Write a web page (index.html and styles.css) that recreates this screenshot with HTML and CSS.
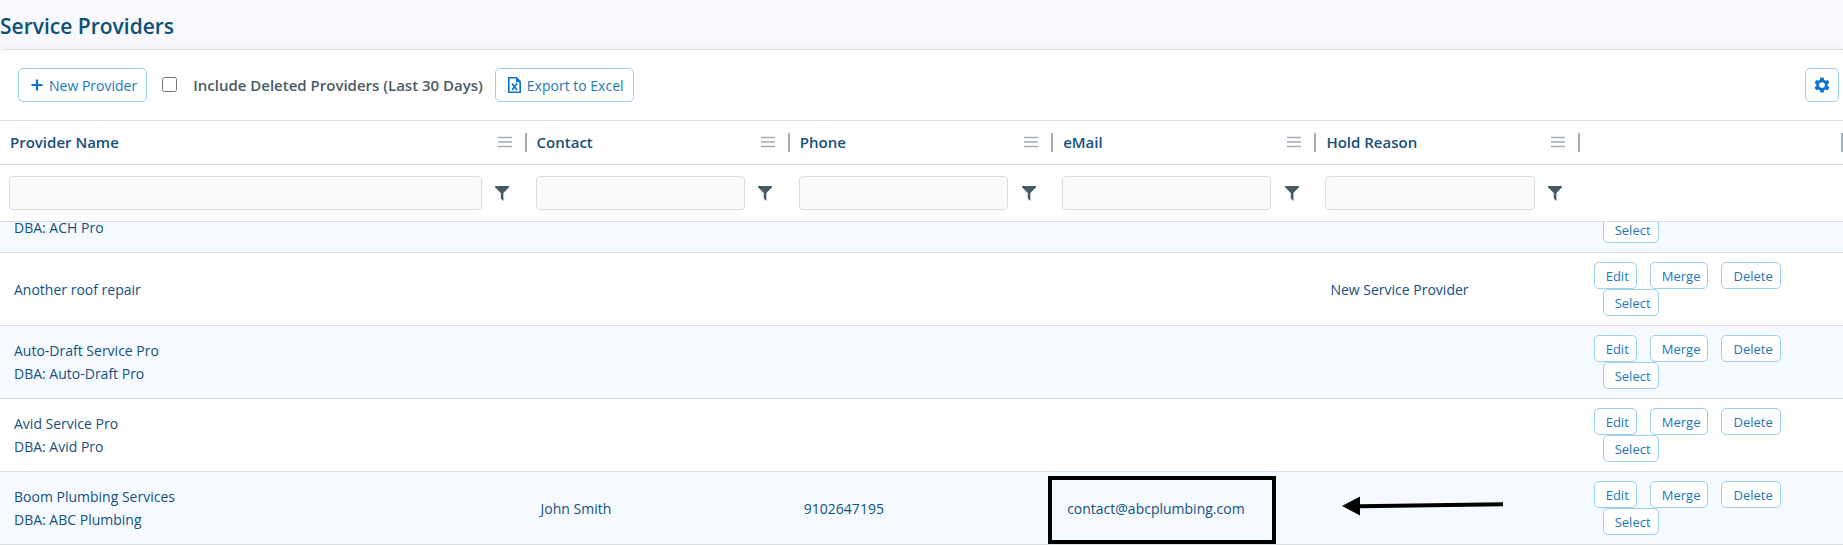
FILE: index.html
```html
<!DOCTYPE html>
<html lang="en">
  <head>
    <meta charset="UTF-8" />
    <meta name="viewport" content="width=device-width, initial-scale=1.0" />
    <title>Service Providers</title>
    <link rel="stylesheet" href="styles.css">
  </head>
  <body>
    <svg class="sprite" aria-hidden="true">
      <symbol id="icon-menu" viewBox="0 0 14 12">
        <path d="M0 1.5h14M0 6h14M0 10.5h14" stroke="#a3adb6" stroke-width="1.3" />
      </symbol>
      <symbol id="icon-filter" viewBox="0 0 14 15">
        <path d="M0 0h14v1.2L8.400 7V15L5.800 12.600V7L0 1.200z" fill="#465a65" />
      </symbol>
    </svg>

    <h1 class="page-title">Service Providers</h1>

    <main class="panel">
      <div class="toolbar">
        <button class="btn">
          <svg class="icon-plus" viewBox="0 0 12 12"><path d="M6 0.5v11M0.5 6h11" stroke="#0a75d1" stroke-width="2.2" /></svg>
          New Provider
        </button>
        <input type="checkbox" id="includeDeleted" class="checkbox" />
        <label for="includeDeleted" class="toolbar-label">Include Deleted Providers (Last 30 Days)</label>
        <button class="btn">
          <svg class="icon-excel" viewBox="0 0 13 16">
            <path d="M0.8 0.8H8.5L12.2 4.5V15.2H0.8z" fill="none" stroke="#0a75d1" stroke-width="1.6" />
            <path d="M8 0.5L12.7 5.2H8z" fill="#0a75d1" />
            <path d="M4 6.5l5 6.5M9 6.5L4 13" stroke="#0a75d1" stroke-width="1.7" />
          </svg>
          Export to Excel
        </button>
        <button class="btn btn-settings" aria-label="Settings">
          <svg class="icon-gear" viewBox="0 0 24 24">
            <path fill="#0a75d1" fill-rule="evenodd" d="M9.6 0.8h4.8l.8 3.5 2 1.2 3.500-1.100 2.400 4.200-2.700 2.400v2.200l2.700 2.400-2.400 4.200-3.500-1.100-2 1.200-.8 3.400H9.600l-.8-3.400-2-1.200-3.500 1.100-2.400-4.200 2.700-2.400v-2.200L.9 8.600l2.400-4.200 3.500 1.100 2-1.200zM12 7.700a4.300 4.300 0 1 0 0 8.600a4.300 4.300 0 1 0 0-8.600z" />
          </svg>
        </button>
      </div>

      <div class="grid" id="grid">
        <table class="providers">
          <colgroup>
            <col class="col-name" />
            <col span="5" />
          </colgroup>
          <thead>
            <tr class="titles">
              <th scope="col"><div class="head">Provider Name <svg class="icon-menu"><use href="#icon-menu" /></svg></div></th>
              <th scope="col"><div class="head">Contact <svg class="icon-menu"><use href="#icon-menu" /></svg></div></th>
              <th scope="col"><div class="head">Phone <svg class="icon-menu"><use href="#icon-menu" /></svg></div></th>
              <th scope="col"><div class="head">eMail <svg class="icon-menu"><use href="#icon-menu" /></svg></div></th>
              <th scope="col"><div class="head">Hold Reason <svg class="icon-menu"><use href="#icon-menu" /></svg></div></th>
              <th scope="col" aria-label="Actions"><div class="head"></div></th>
            </tr>
            <tr class="filters">
              <td><div class="filter"><input type="text" aria-label="Filter by provider name" /><button aria-label="Filter options"><svg class="icon-filter"><use href="#icon-filter" /></svg></button></div></td>
              <td><div class="filter"><input type="text" aria-label="Filter by contact" /><button aria-label="Filter options"><svg class="icon-filter"><use href="#icon-filter" /></svg></button></div></td>
              <td><div class="filter"><input type="text" aria-label="Filter by phone" /><button aria-label="Filter options"><svg class="icon-filter"><use href="#icon-filter" /></svg></button></div></td>
              <td><div class="filter"><input type="text" aria-label="Filter by email" /><button aria-label="Filter options"><svg class="icon-filter"><use href="#icon-filter" /></svg></button></div></td>
              <td><div class="filter"><input type="text" aria-label="Filter by hold reason" /><button aria-label="Filter options"><svg class="icon-filter"><use href="#icon-filter" /></svg></button></div></td>
              <td></td>
            </tr>
          </thead>
          <tbody>
            <tr>
              <td>ACH Pro<br />DBA: ACH Pro</td>
              <td></td>
              <td></td>
              <td></td>
              <td></td>
              <td>
                <div class="actions">
                  <button>Edit</button><button>Merge</button><button>Delete</button>
                  <button class="select">Select</button>
                </div>
              </td>
            </tr>
            <tr>
              <td>Another roof repair</td>
              <td></td>
              <td></td>
              <td></td>
              <td>New Service Provider</td>
              <td>
                <div class="actions">
                  <button>Edit</button><button>Merge</button><button>Delete</button>
                  <button class="select">Select</button>
                </div>
              </td>
            </tr>
            <tr>
              <td>Auto-Draft Service Pro<br />DBA: Auto-Draft Pro</td>
              <td></td>
              <td></td>
              <td></td>
              <td></td>
              <td>
                <div class="actions">
                  <button>Edit</button><button>Merge</button><button>Delete</button>
                  <button class="select">Select</button>
                </div>
              </td>
            </tr>
            <tr>
              <td>Avid Service Pro<br />DBA: Avid Pro</td>
              <td></td>
              <td></td>
              <td></td>
              <td></td>
              <td>
                <div class="actions">
                  <button>Edit</button><button>Merge</button><button>Delete</button>
                  <button class="select">Select</button>
                </div>
              </td>
            </tr>
            <tr>
              <td>Boom Plumbing Services<br />DBA: ABC Plumbing</td>
              <td>John Smith</td>
              <td>9102647195</td>
              <td class="marked">contact@abcplumbing.com<span class="mark-box"></span></td>
              <td class="marked">
                <svg class="mark-arrow" viewBox="0 0 161 20">
                  <path d="M18 10.300L161 8.300" stroke="#000" stroke-width="4" />
                  <path d="M0 10L18 0.500v19z" />
                </svg>
              </td>
              <td>
                <div class="actions">
                  <button>Edit</button><button>Merge</button><button>Delete</button>
                  <button class="select">Select</button>
                </div>
              </td>
            </tr>
          </tbody>
        </table>
      </div>
    </main>

    <script>
      // Open the list at its last rows
      const grid = document.getElementById("grid");
      grid.scrollTop = grid.scrollHeight;
    </script>
  </body>
</html>
```

FILE: styles.css
```css
* {
  box-sizing: border-box;
}
body {
  display: flex;
  flex-direction: column;
  height: 100vh;
  margin: 0;
  font-family: "Open Sans", "Noto Sans", sans-serif;
  font-size: 14px;
  color: #14507d;
  background-color: #f8f9fc;
}
button,
input {
  font-family: inherit;
}
.sprite {
  display: none;
}
.page-title {
  margin: 0;
  padding: 12px 0 9px;
  font-size: 21px;
  font-weight: 600;
  line-height: 28px;
  color: #0c5079;
}
.panel {
  display: flex;
  flex-direction: column;
  flex: 1;
  min-height: 0;
  background-color: white;
  border-top: 1px solid #dadde0;
  border-top-left-radius: 6px;
  box-shadow: 0 0 8px rgba(0, 0, 0, 0.05);
}
.toolbar {
  display: flex;
  align-items: center;
  padding: 18px 4px 18px 18px;
  border-bottom: 1px solid #dadde0;
}
.btn {
  display: flex;
  align-items: center;
  gap: 6px;
  height: 34px;
  padding: 0 9px 0 12px;
  font-size: 14px;
  color: #1a78b8;
  background-color: white;
  border: 1px solid #9bcfee;
  border-radius: 5px;
  cursor: pointer;
}
.checkbox {
  width: 15px;
  height: 15px;
  margin: 0 16px 2px 15px;
}
.toolbar-label {
  margin-right: 12px;
  font-size: 15px;
  font-weight: 600;
  line-height: 20px;
  color: #4a5b65;
}
.btn-settings {
  justify-content: center;
  width: 34px;
  padding: 0;
  margin-left: auto;
}
.icon-plus {
  width: 12px;
  height: 12px;
}
.icon-excel {
  width: 13px;
  height: 16px;
}
.icon-gear {
  width: 16px;
  height: 16px;
}
.grid {
  flex: 1;
  min-height: 0;
  overflow-y: auto;
  scrollbar-width: none;
}
.providers {
  width: 100%;
  table-layout: fixed;
  border-collapse: separate;
  border-spacing: 0;
}
.col-name {
  width: calc(100% / 7 * 2);
}
.providers th,
.providers td {
  padding: 0;
  text-align: left;
  border-bottom: 1px solid #dadde0;
}
thead {
  position: sticky;
  top: 0;
  z-index: 1;
  background-color: white;
}
.head {
  display: flex;
  align-items: center;
  justify-content: space-between;
  height: 19px;
  margin: 12px 0;
  padding: 0 13px 0 10px;
  font-size: 15px;
  font-weight: 600;
  line-height: 19px;
  border-right: 2px solid #a3adb6;
}
.icon-menu {
  width: 14px;
  height: 12px;
  margin-bottom: 2px;
}
.filter {
  display: flex;
  padding: 11px 4px 11px 9px;
}
.filter input {
  flex: 1;
  min-width: 0;
  height: 34px;
  padding: 4px 8px;
  background-color: #f9fafc;
  border: 1px solid #dadde0;
  border-radius: 4px;
}
.filter button {
  width: 41px;
  padding: 0;
  background: none;
  border: none;
  cursor: pointer;
}
.icon-filter {
  display: block;
  width: 14px;
  height: 15px;
  margin: 0 auto;
}
tbody tr:nth-child(odd) {
  background-color: #f4faff;
}
.providers tbody td {
  height: 73px;
  padding: 0 14px;
  line-height: 23px;
}
.actions {
  display: flex;
  flex-wrap: wrap;
  column-gap: 13px;
}
.actions button {
  height: 27px;
  padding: 0 7px 0 11px;
  font-size: 13px;
  color: #1a78b8;
  background-color: white;
  border: 1px solid #9bcfee;
  border-radius: 5px;
  cursor: pointer;
}
.actions .select {
  margin-left: 9px;
}
/* the marks lie over the row */
.marked {
  position: relative;
}
.mark-box {
  position: absolute;
  top: 4px;
  bottom: 0;
  left: -5px;
  width: 228px;
  border: 4px solid black;
}
.mark-arrow {
  position: absolute;
  top: 24px;
  left: 26px;
  width: 161px;
  height: 20px;
}
```
